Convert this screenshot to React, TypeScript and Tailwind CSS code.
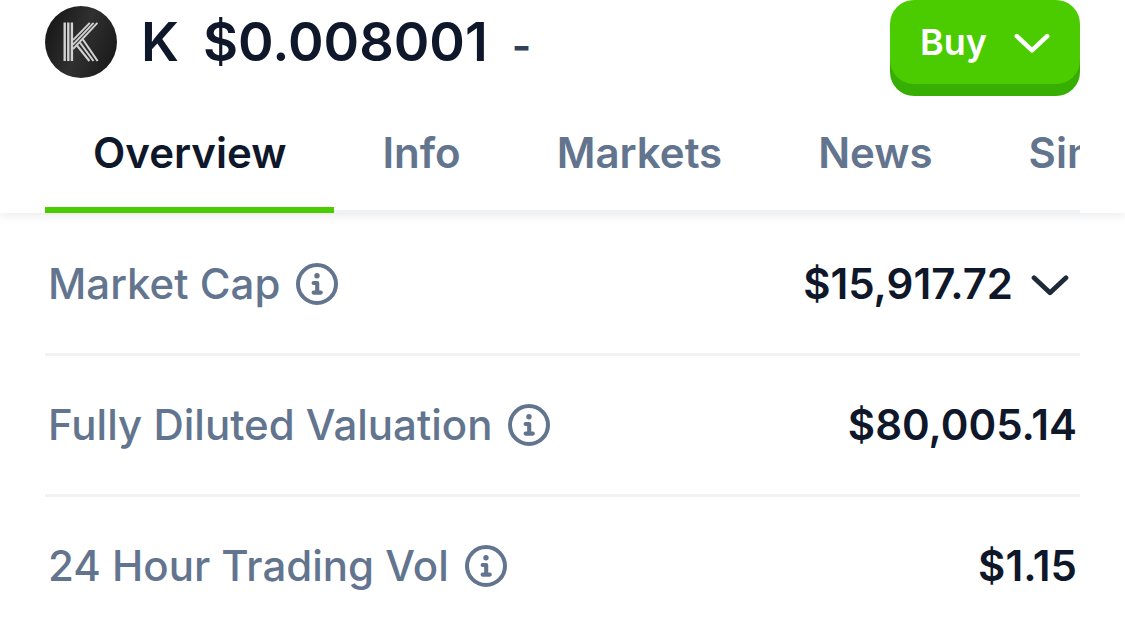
const tabs = ['Overview', 'Info', 'Markets', 'News', 'Similar Coins'];

const stats = [
  { label: 'Market Cap', value: '$15,917.72', expandable: true },
  { label: 'Fully Diluted Valuation', value: '$80,005.14' },
  { label: '24 Hour Trading Vol', value: '$1.15' },
];

const CoinLogo = () => (
  <svg viewBox="0 0 72 72" className="size-18 shrink-0" role="img" aria-label="K logo">
    <defs>
      <linearGradient id="coin" x1="0" y1="0.3" x2="1" y2="0.7">
        <stop offset="0" stopColor="#171717" />
        <stop offset="0.5" stopColor="#303030" />
        <stop offset="1" stopColor="#1a1a1a" />
      </linearGradient>
    </defs>
    <circle cx="36" cy="36" r="36" fill="url(#coin)" />
    <g fill="none" stroke="#d2d2d2">
      {/* stem */}
      <path d="M19.7 16.5V55M23.3 16.5V55M26.9 16.5V55" strokeWidth="2.4" />
      {/* arm */}
      <path d="M44.8 16.8L28 34.2M48.6 16.8L28 38.6M52.4 16.8L28 43" strokeWidth="1.9" />
      {/* leg */}
      <path d="M32 39.5L44.4 55M34.9 36.5L48.5 55M37.9 33.5L52.6 55" strokeWidth="2.1" />
    </g>
  </svg>
);

const Chevron = ({ className }: { className: string }) => (
  <svg viewBox="0 0 38 24" className={`h-6 ${className}`} fill="none" aria-hidden="true">
    <path d="M3 5.8L19 20.8L35 5.8" stroke="currentColor" strokeWidth="4.8" strokeLinecap="round" strokeLinejoin="round" />
  </svg>
);

const InfoIcon = () => (
  <svg viewBox="0 0 42 42" className="size-[42px]" fill="none" aria-hidden="true">
    <circle cx="21" cy="21" r="19" stroke="currentColor" strokeWidth="4" />
    <circle cx="21" cy="12.8" r="2.7" fill="currentColor" />
    <path d="M17.6 20H21.2V29.6M17.6 29.6H24.8" stroke="currentColor" strokeWidth="4.1" strokeLinecap="round" strokeLinejoin="round" />
  </svg>
);

const App = () => (
  <div className="min-h-screen bg-white font-['Inter',sans-serif] text-slate-900">
    <header className="px-[45px] shadow-[0_3px_9px_rgba(0,0,0,0.08)]">
      <div className="flex items-center justify-between">
        <div className="flex items-center gap-6">
          <CoinLogo />
          <div className="flex items-baseline gap-6 font-semibold">
            <h1 className="text-[54px] leading-[72px]">K</h1>
            <span className="text-[54px] leading-[72px]">$0.008001</span>
            <span className="text-[42px] leading-[60px] text-slate-700">-</span>
          </div>
        </div>
        <button
          type="button"
          className="flex h-[84px] items-center gap-[27px] rounded-3xl bg-[#4bcc00] px-[30px] text-4xl font-semibold text-white shadow-[0_12px_0_#37ae02]"
        >
          Buy
          <Chevron className="w-9 text-white" />
        </button>
      </div>

      <nav className="mt-[15px] flex overflow-hidden shadow-[inset_0_-3px_0_#eff2f5]">
        {tabs.map((tab, i) => (
          <button
            key={tab}
            type="button"
            className={`shrink-0 border-b-6 px-12 py-6 text-[42px] leading-[60px] font-semibold whitespace-nowrap ${
              i === 0 ? 'border-[#4bcc00] text-slate-900' : 'border-transparent text-slate-500'
            }`}
          >
            {tab}
          </button>
        ))}
      </nav>
    </header>

    <main className="px-[45px]">
      <table className="w-full border-t-2 border-[#eff2f5] text-[42px] leading-[60px]">
        <tbody>
          {stats.map(({ label, value, expandable }) => (
            <tr key={label} className="border-b-3 border-[#f0f2f4] last:border-b-0">
              <th scope="row" className="py-[39px] pl-[3px] text-left font-medium text-slate-500">
                <span className="flex items-center gap-4">
                  {label}
                  <button type="button" aria-label={`About ${label}`}>
                    <InfoIcon />
                  </button>
                </span>
              </th>
              <td className="py-[39px] pr-[3px] font-semibold">
                <span className="flex items-center justify-end gap-[18px]">
                  {value}
                  {expandable && (
                    <button type="button" aria-label={`Expand ${label}`} className="mr-2">
                      <Chevron className="w-[38px] text-gray-800" />
                    </button>
                  )}
                </span>
              </td>
            </tr>
          ))}
        </tbody>
      </table>
    </main>
  </div>
);

export default App;
